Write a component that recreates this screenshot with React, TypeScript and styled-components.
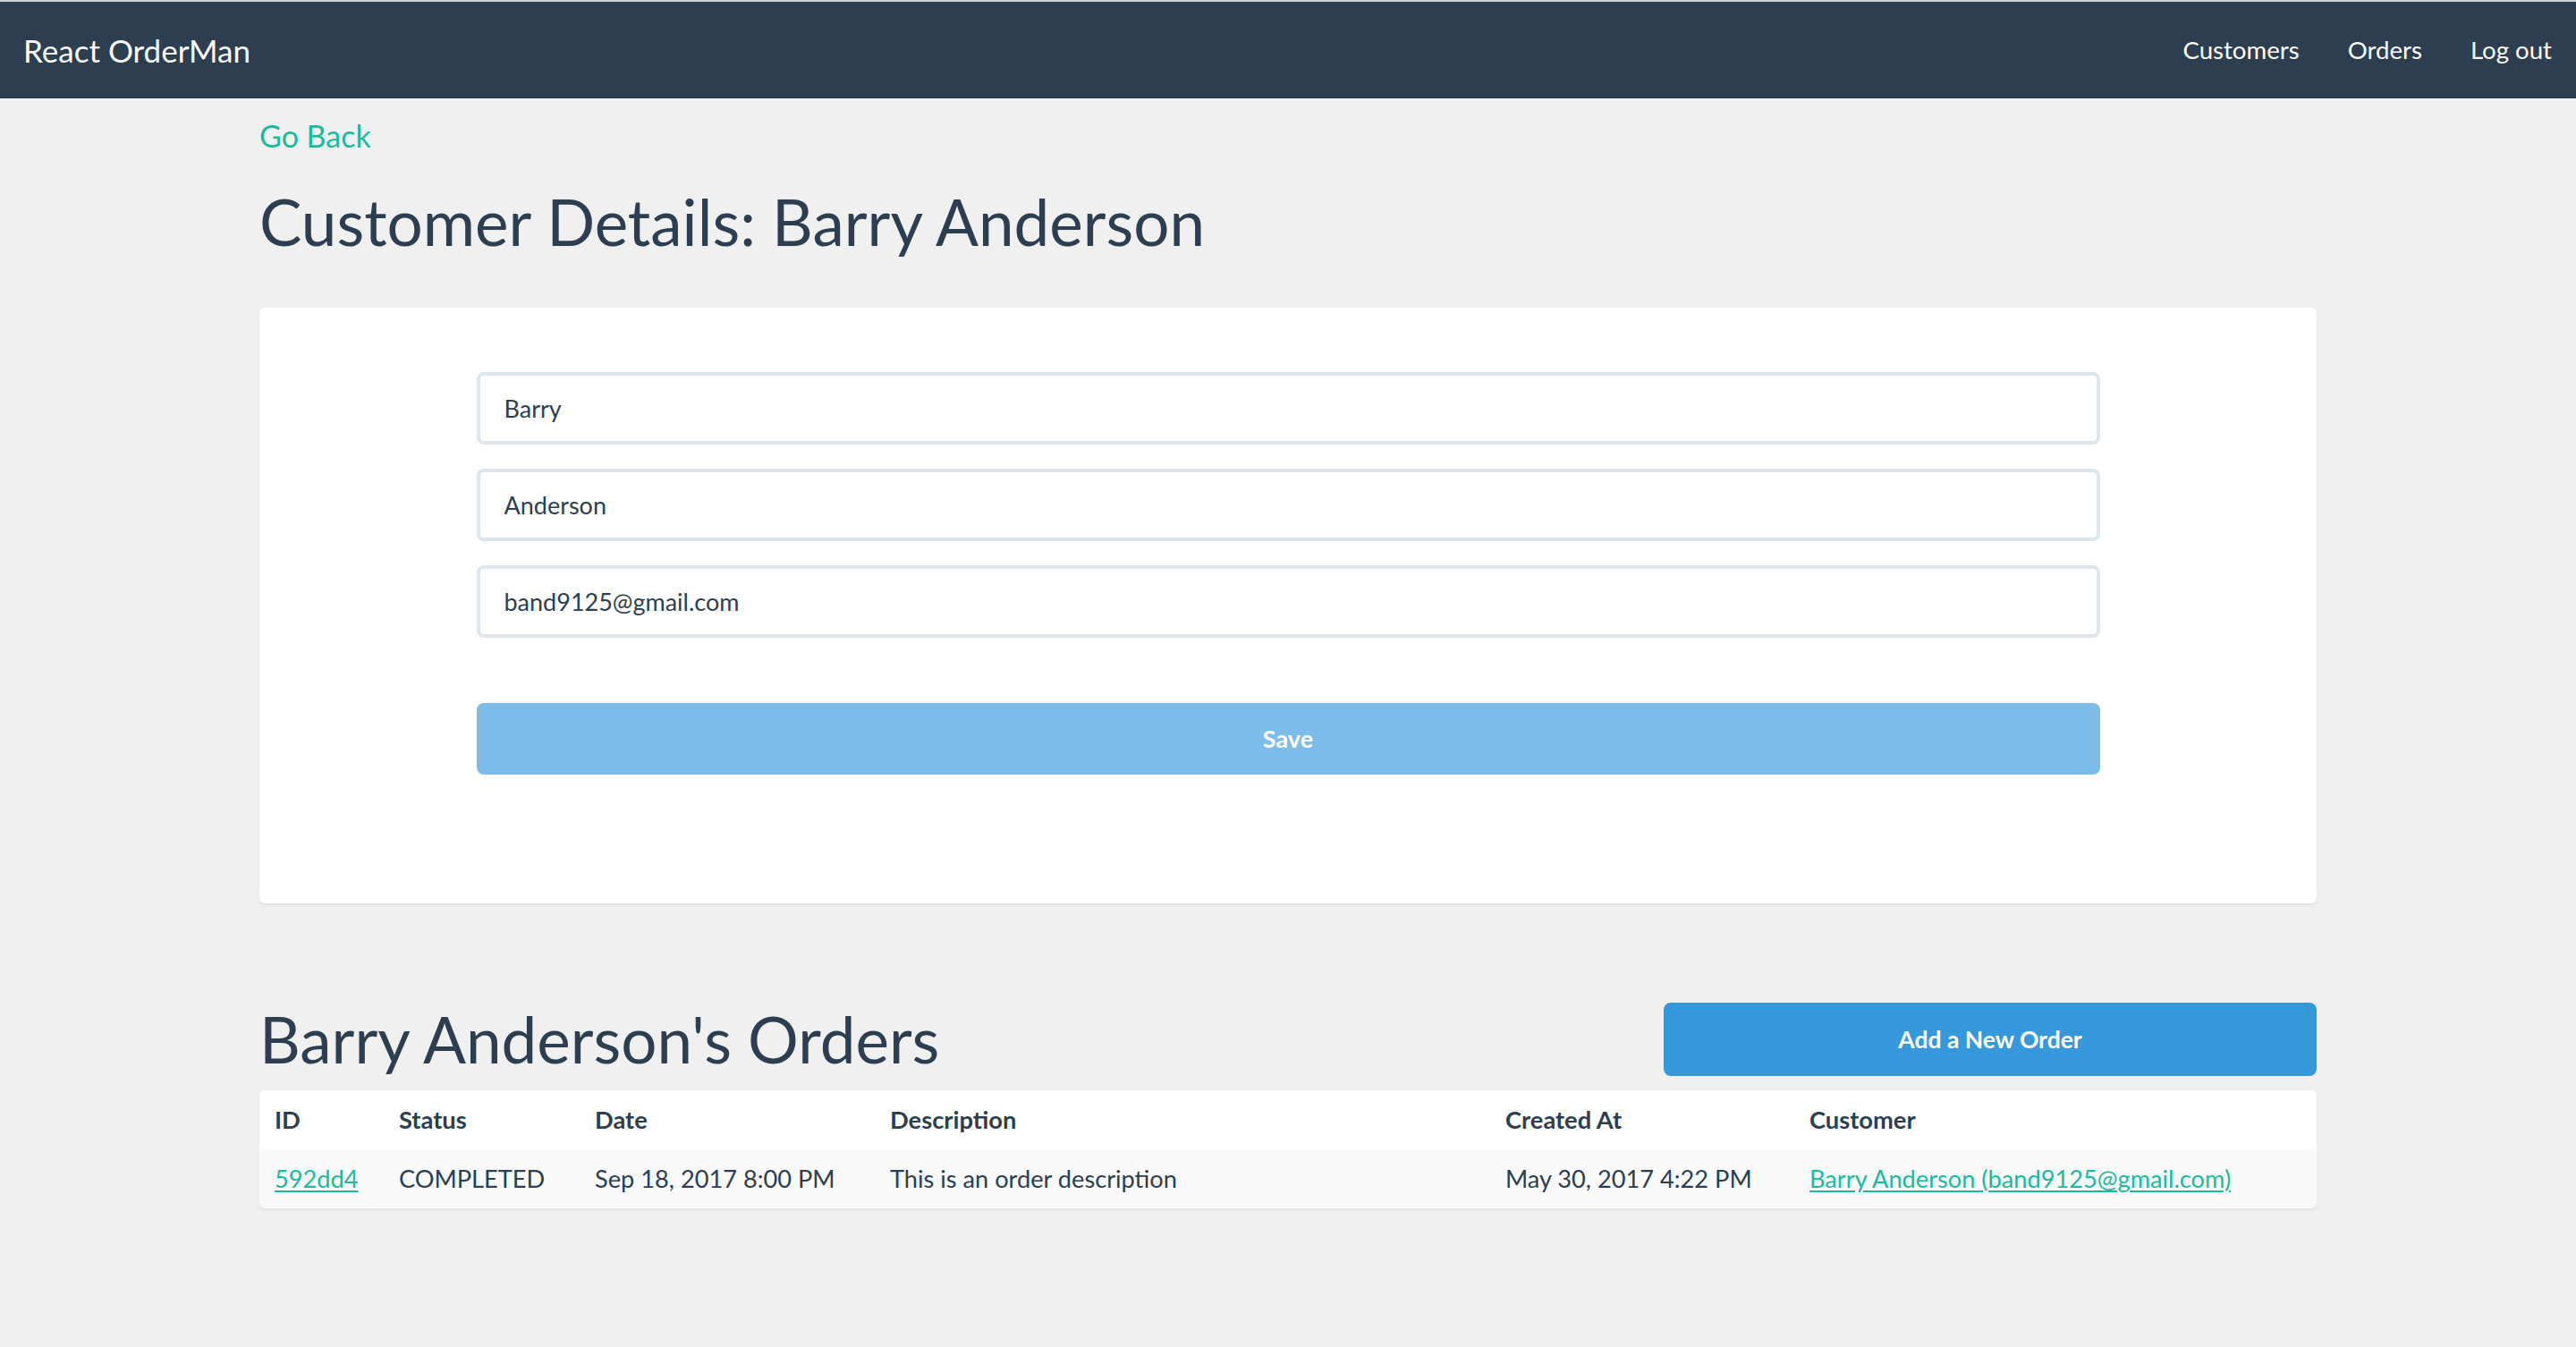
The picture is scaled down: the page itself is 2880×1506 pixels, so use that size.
import React from "react";
import styled, { createGlobalStyle } from "styled-components";

const GlobalStyle = createGlobalStyle`
  html, body {
    margin: 0;
    padding: 0;
    background: #f0f0f0;
    font-family: Lato, "Open Sans", "Liberation Sans", sans-serif;
    color: #2c3e50;
  }
  * { box-sizing: border-box; }
`;

const NavBar = styled.nav`
  height: 110px;
  background: #2c3e50;
  border-top: 2px solid #cfd3d6;
  display: flex;
  align-items: center;
  justify-content: space-between;
  padding-left: 26px;
`;

const Brand = styled.a`
  color: #ffffff;
  font-size: 35px;
  line-height: 1.2;
  text-decoration: none;
`;

const NavLinks = styled.div`
  display: flex;
  align-items: center;
`;

const NavLink = styled.a`
  color: #ffffff;
  font-size: 27.6px;
  line-height: 1.2;
  padding: 0 27px;
  text-decoration: none;
`;

const Container = styled.main`
  width: 2300px;
  margin: 0 auto;
  padding-bottom: 120px;
`;

const BackLink = styled.a`
  display: inline-block;
  margin-top: 22px;
  font-size: 34px;
  line-height: 1.2;
  color: #18bc9c;
  text-decoration: none;
`;

const PageTitle = styled.h1`
  margin: 35px 0 0;
  font-size: 71px;
  font-weight: 400;
  line-height: 80px;
  color: #2c3e50;
`;

const Card = styled.section`
  margin-top: 56px;
  background: #ffffff;
  border-radius: 6px;
  box-shadow: 0 2px 3px rgba(0, 0, 0, 0.07);
  padding: 72px 0 144px;
`;

const Form = styled.form`
  width: 1815px;
  margin: 0 auto;
  display: flex;
  flex-direction: column;
`;

const Input = styled.input`
  height: 81px;
  border: 4px solid #dce4ec;
  border-radius: 8px;
  padding: 0 27px;
  font-family: inherit;
  font-size: 27px;
  color: #2c3e50;
  background: #ffffff;
  margin-bottom: 27px;
  outline: none;
`;

const Button = styled.button<{ $disabledLook?: boolean; $width?: string }>`
  height: ${(p) => (p.$disabledLook ? "80px" : "82px")};
  width: ${(p) => p.$width || "100%"};
  border: none;
  border-radius: 8px;
  background: ${(p) => (p.$disabledLook ? "#7dbbe8" : "#3598db")};
  color: #ffffff;
  font-family: inherit;
  font-size: ${(p) => (p.$disabledLook ? "27px" : "26.5px")};
  font-weight: 700;
  cursor: pointer;
`;

const SaveButton = styled(Button)`
  margin-top: 46px;
`;

const OrdersHeader = styled.div`
  margin-top: 111px;
  display: flex;
  align-items: center;
  justify-content: space-between;
`;

const SectionTitle = styled.h2`
  margin: 0;
  font-size: 71px;
  font-weight: 400;
  line-height: 80px;
  color: #2c3e50;
`;

const TableCard = styled.div`
  margin-top: 16px;
  background: #ffffff;
  border-radius: 6px;
  box-shadow: 0 2px 3px rgba(0, 0, 0, 0.07);
  overflow: hidden;
`;

const Table = styled.table`
  width: 100%;
  border-collapse: collapse;
  table-layout: fixed;
`;

const HeadCell = styled.th`
  height: 66px;
  padding: 0 0 0 17px;
  text-align: left;
  font-size: 27.3px;
  font-weight: 700;
  color: #2c3e50;
`;

const BodyRow = styled.tr`
  background: #f9f9f9;
`;

const Cell = styled.td`
  height: 66px;
  padding: 0 0 0 17px;
  font-size: 27.2px;
  color: #2c3e50;
  white-space: nowrap;
`;

const TableLink = styled.a`
  color: #18bc9c;
  text-decoration: underline;
  text-underline-offset: 3px;
`;

const columns = [
  { label: "ID", width: 139 },
  { label: "Status", width: 219 },
  { label: "Date", width: 330 },
  { label: "Description", width: 688 },
  { label: "Created At", width: 340 },
  { label: "Customer", width: undefined },
];

export default function App() {
  return (
    <>
      <GlobalStyle />
      <NavBar>
        <Brand href="#">React OrderMan</Brand>
        <NavLinks>
          <NavLink href="#">Customers</NavLink>
          <NavLink href="#">Orders</NavLink>
          <NavLink href="#">Log out</NavLink>
        </NavLinks>
      </NavBar>
      <Container>
        <BackLink href="#">Go Back</BackLink>
        <PageTitle>Customer Details: Barry Anderson</PageTitle>
        <Card>
          <Form onSubmit={(e) => e.preventDefault()}>
            <Input defaultValue="Barry" />
            <Input defaultValue="Anderson" />
            <Input defaultValue="band9125@gmail.com" />
            <SaveButton type="submit" $disabledLook>
              Save
            </SaveButton>
          </Form>
        </Card>
        <OrdersHeader>
          <SectionTitle>Barry Anderson's Orders</SectionTitle>
          <Button $width="730px">Add a New Order</Button>
        </OrdersHeader>
        <TableCard>
          <Table>
            <colgroup>
              {columns.map((c) => (
                <col key={c.label} style={c.width ? { width: c.width } : undefined} />
              ))}
            </colgroup>
            <thead>
              <tr>
                {columns.map((c) => (
                  <HeadCell key={c.label}>{c.label}</HeadCell>
                ))}
              </tr>
            </thead>
            <tbody>
              <BodyRow>
                <Cell>
                  <TableLink href="#">592dd4</TableLink>
                </Cell>
                <Cell>COMPLETED</Cell>
                <Cell>Sep 18, 2017 8:00 PM</Cell>
                <Cell>This is an order description</Cell>
                <Cell>May 30, 2017 4:22 PM</Cell>
                <Cell>
                  <TableLink href="#">Barry Anderson (band9125@gmail.com)</TableLink>
                </Cell>
              </BodyRow>
            </tbody>
          </Table>
        </TableCard>
      </Container>
    </>
  );
}
